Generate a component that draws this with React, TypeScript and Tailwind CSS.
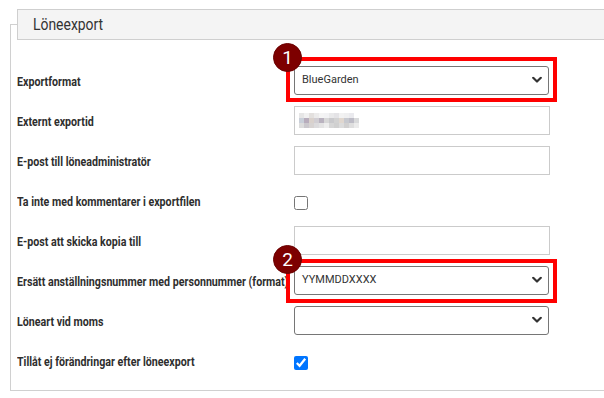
import { ReactNode } from "react";

function Chevron() {
  return (
    <svg
      width="10"
      height="7"
      viewBox="0 0 10 7"
      className="pointer-events-none absolute right-[6px] top-1/2 -translate-y-1/2"
    >
      <path d="M1.2 1.3 L5 5 L8.8 1.3" fill="none" stroke="#333" strokeWidth="2.2" strokeLinecap="round" strokeLinejoin="round" />
    </svg>
  );
}

function Select({ value }: { value?: string }) {
  return (
    <div className="relative h-[29px] w-[255px] rounded-[3px] border border-[#767676] bg-white">
      <div className="flex h-full items-center pl-[7px] text-[11px] text-[#333] font-['Roboto',_sans-serif]">
        {value}
      </div>
      <Chevron />
    </div>
  );
}

function TextInput({ children }: { children?: ReactNode }) {
  return (
    <div className="flex h-[29px] w-[256px] items-center border border-[#cbcbcb] bg-white pl-[4px]">
      {children}
    </div>
  );
}

function Badge({ n, className }: { n: number; className: string }) {
  return (
    <div
      className={`absolute flex h-[29px] w-[29px] items-center justify-center rounded-full border border-[#6a0000] bg-[#7d0000] text-[19px] leading-none text-white font-['Roboto',_sans-serif] ${className}`}
    >
      {n}
    </div>
  );
}

const blur = [
  ["#e6e6e6", "#f1f1f1", "#e3e0de", "#ecebeb", "#f4f4f4", "#f2f2f4", "#e9e9ea", "#e4e3e6", "#f2f2f2", "#efeff0", "#eaeaee", "#ffffff"],
  ["#c9cfd9", "#b8adbc", "#d9d1cc", "#d1ced3", "#b9b2bf", "#d7d7d7", "#c9c9cc", "#d2d2d2", "#e0d7cf", "#c7c9cf", "#bdbcc6", "#d9dadb"],
  ["#dcdcdc", "#cbc8cd", "#d7d3d2", "#dcdbdd", "#e3e3e3", "#ededed", "#d6d6d6", "#d0d0d0", "#dcdcdc", "#d1d0d0", "#dedede", "#ebebeb"],
];

function Blurred() {
  return (
    <div className="grid grid-cols-[repeat(12,5px)] grid-rows-[repeat(3,5px)]">
      {blur.flat().map((c, i) => (
        <span key={i} style={{ backgroundColor: c }} />
      ))}
    </div>
  );
}

function Row({ label, children }: { label: string; children: ReactNode }) {
  return (
    <div className="flex h-10 items-center">
      <div className="w-[277px] whitespace-nowrap">
        <span className="inline-block origin-left scale-x-[0.82] text-[13px] font-bold leading-none text-[#2e2e2e] font-['Roboto',_sans-serif]">
          {label}
        </span>
      </div>
      <div>{children}</div>
    </div>
  );
}

export default function App() {
  return (
    <div className="h-[398px] w-[604px] overflow-hidden bg-white pt-[9px]">
      <fieldset className="ml-[10px] w-[660px] border border-[#d0d0d0] p-0">
        <legend className="ml-[6px] flex h-[31px] w-[640px] items-center border border-[#cfcfcf] bg-[#f4f4f4] pl-[15px]">
          <span className="inline-block origin-left scale-x-[0.87] text-[16px] text-[#333] font-['Roboto',_sans-serif]">
            Löneexport
          </span>
        </legend>

        <div className="pb-[10px] pl-[6px] pt-5">
          <Row label="Exportformat">
            <div className="relative">
              <Select value="BlueGarden" />
              <div className="pointer-events-none absolute bottom-[-7px] left-[-8px] right-[-8px] top-[-9px] border-4 border-[#ff0000]" />
              <Badge n={1} className="left-[-21px] top-[-23px]" />
            </div>
          </Row>
          <Row label="Externt exportid">
            <TextInput>
              <Blurred />
            </TextInput>
          </Row>
          <Row label="E-post till löneadministratör">
            <TextInput />
          </Row>
          <Row label="Ta inte med kommentarer i exportfilen">
            <input type="checkbox" className="mt-[6px] block h-[14px] w-[14px]" />
          </Row>
          <Row label="E-post att skicka kopia till">
            <TextInput />
          </Row>
          <Row label="Ersätt anställningsnummer med personnummer (format)">
            <div className="relative">
              <Select value="YYMMDDXXXX" />
              <div className="pointer-events-none absolute bottom-[-8px] left-[-8px] right-[-8px] top-[-7px] border-4 border-[#ff0000]" />
              <Badge n={2} className="left-[-21px] top-[-21px]" />
            </div>
          </Row>
          <Row label="Löneart vid moms">
            <Select />
          </Row>
          <Row label="Tillåt ej förändringar efter löneexport">
            <input type="checkbox" defaultChecked className="mt-[6px] block h-[14px] w-[14px]" />
          </Row>
        </div>
      </fieldset>
    </div>
  );
}
